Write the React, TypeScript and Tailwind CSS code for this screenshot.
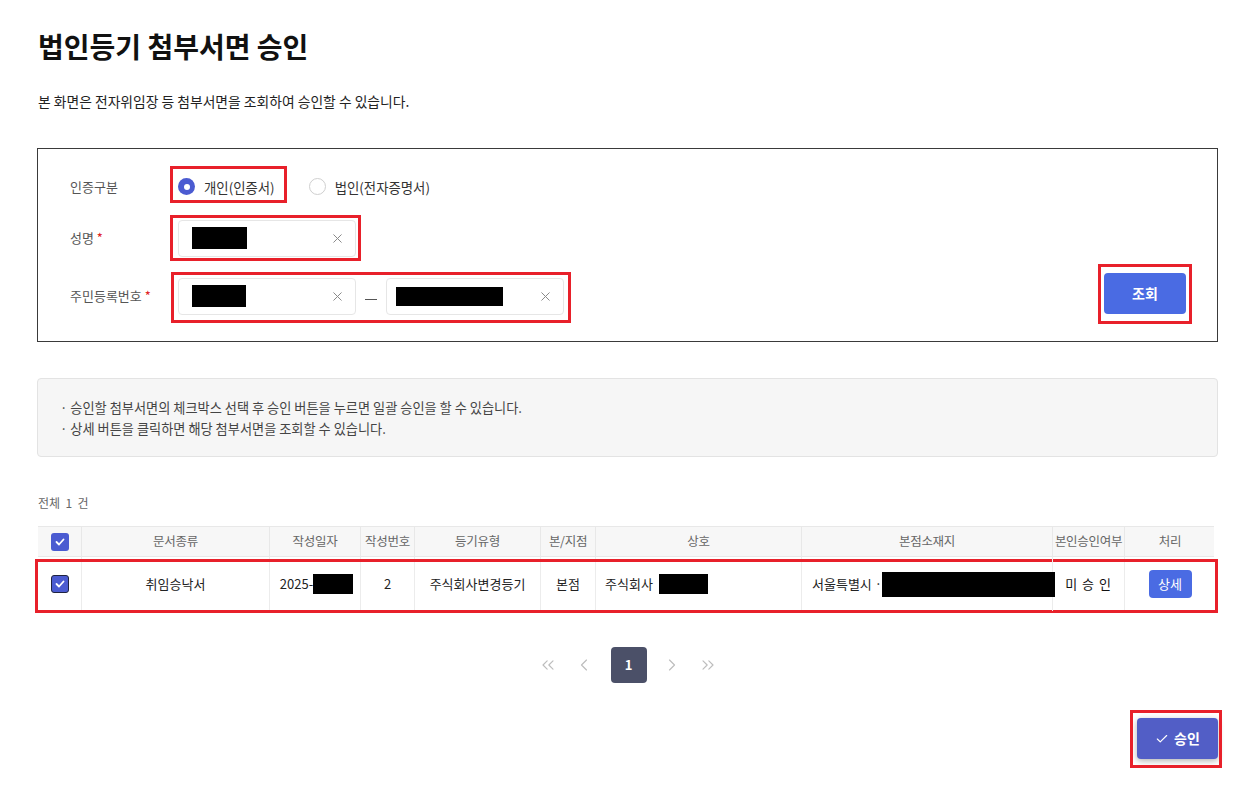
import React from "react";
import { ChevronLeft, ChevronRight, ChevronsLeft, ChevronsRight, Check, X } from "lucide-react";

function RedBox({ className }: { className: string }) {
  return <span className={"pointer-events-none absolute border-[3px] border-[#e8202a] " + className} />;
}

function CheckBox({ focused }: { focused?: boolean }) {
  return (
    <span
      className={
        "flex h-[18px] w-[18px] items-center justify-center rounded-[3px] bg-[#4b5bd1] " +
        (focused ? "border border-[#1f2340]" : "")
      }
    >
      <svg width="10" height="8" viewBox="0 0 10 8" fill="none">
        <path d="M1.5 4l2.5 2.5L8.5 1.5" stroke="white" strokeWidth="1.8" strokeLinecap="round" strokeLinejoin="round" />
      </svg>
    </span>
  );
}

function ClearInput({ blackW, blackH = 22, pl = 13 }: { blackW: number; blackH?: number; pl?: number }) {
  return (
    <div
      className="flex h-[37px] w-[178px] items-center justify-between rounded-[4px] border border-[#e6e6e6] bg-white pr-[10px]"
      style={{ paddingLeft: pl }}
    >
      <div className="bg-black" style={{ width: blackW, height: blackH }} />
      <X size={15} strokeWidth={1.6} className="text-[#8a8a8a]" />
    </div>
  );
}

const cols = "grid grid-cols-[44px_188px_91px_54px_126px_55px_206px_251px_72px_90px]";

export default function App() {
  return (
    <div className="min-h-[787px] bg-white font-['Noto_Sans_CJK_KR','Noto_Sans',sans-serif] text-[#222]">
      <div className="ml-[37px] w-[1181px] pt-[27px]">
        <h1 className="pl-[1px] text-[28px] font-bold leading-[38px] text-[#111]">법인등기 첨부서면 승인</h1>
        <p className="mt-[26px] pl-[1px] text-[13.8px] leading-[20px] text-[#222]">
          본 화면은 전자위임장 등 첨부서면을 조회하여 승인할 수 있습니다.
        </p>

        {/* search box */}
        <div className="mt-[37px] border border-[#3a3a3a] pb-[26px] pl-[32px] pr-[31px] pt-[21px]">
          <div className="flex h-[34px] items-center">
            <div className="w-[108px] text-[13px] text-[#555]">인증구분</div>
            <div className="relative flex items-center gap-[9px]">
              <RedBox className="-left-[8px] -right-[12px] -top-[11px] -bottom-[6px]" />
              <span className="flex h-[17px] w-[17px] items-center justify-center rounded-full bg-[#4b5bd1]">
                <span className="h-[6px] w-[6px] rounded-full bg-white" />
              </span>
              <span className="text-[13.4px] text-[#333]">개인(인증서)</span>
            </div>
            <div className="ml-[34px] flex items-center gap-[9px]">
              <span className="h-[17px] w-[17px] rounded-full border border-[#cfcfcf] bg-white" />
              <span className="text-[13.4px] text-[#333]">법인(전자증명서)</span>
            </div>
          </div>

          <div className="mt-[15px] flex h-[38px] items-center">
            <div className="w-[108px] text-[13px] text-[#555]">
              성명 <span className="text-[#e02424]">*</span>
            </div>
            <div className="relative">
              <RedBox className="-left-[8px] -right-[5px] -top-[5px] -bottom-[4px]" />
              <ClearInput blackW={55} />
            </div>
          </div>

          <div className="mt-[20px] flex items-center justify-between">
            <div className="flex h-[38px] items-center">
              <div className="w-[108px] text-[13px] text-[#555]">
                주민등록번호 <span className="text-[#e02424]">*</span>
              </div>
              <div className="relative flex items-center">
                <RedBox className="-left-[7px] -right-[7px] -top-[6px] -bottom-[8px]" />
                <ClearInput blackW={54} />
                <span className="mx-[9px] mt-[6px] h-[1px] w-[12px] bg-[#555]" />
                <ClearInput blackW={107} blackH={19} pl={9} />
              </div>
            </div>
            <div className="relative -mt-[5px]">
              <RedBox className="-left-[6px] -right-[6px] -top-[9px] -bottom-[10px]" />
              <button className="h-[41px] w-[82px] rounded-[4px] bg-[#4a6be3] text-[14px] font-semibold text-white">
                조회
              </button>
            </div>
          </div>
        </div>

        {/* info box */}
        <div className="mt-[36px] rounded-[4px] border border-[#e3e3e3] bg-[#f6f6f6] pb-[17px] pl-[22px] pt-[18px] text-[13.2px] leading-[21px] text-[#444]">
          <p>· 승인할 첨부서면의 체크박스 선택 후 승인 버튼을 누르면 일괄 승인을 할 수 있습니다.</p>
          <p>· 상세 버튼을 클릭하면 해당 첨부서면을 조회할 수 있습니다.</p>
        </div>

        <p className="mt-[37px] pl-[1px] text-[12px] leading-[18px] text-[#666]">전체&nbsp; 1&nbsp; 건</p>

        {/* table */}
        <div className="mt-[14px] w-[1177px] pl-[1px]">
          <div className={cols + " h-[31px] border-y border-[#e8e8e8] bg-[#f7f7f7] text-[12.5px] text-[#666]"}>
            <div className="flex items-center justify-center border-r border-[#e8e8e8]">
              <CheckBox />
            </div>
            {["문서종류", "작성일자", "작성번호", "등기유형", "본/지점", "상호", "본점소재지", "본인승인여부", "처리"].map((h, i) => (
              <div
                key={h}
                className={
                  "flex items-center justify-center whitespace-nowrap tracking-[-0.3px] " +
                  (i < 8 ? "border-r border-[#e8e8e8]" : "")
                }
              >
                {h}
              </div>
            ))}
          </div>
          <div className="relative">
            <RedBox className="-left-[3px] -right-[4px] top-[2px] -bottom-[1px]" />
            <div className={cols + " h-[55px] border-b border-[#e8e8e8] text-[13px] text-[#222]"}>
              <div className="flex items-center justify-center border-r border-[#ececec]">
                <CheckBox focused />
              </div>
              <div className="flex items-center justify-center border-r border-[#ececec]">취임승낙서</div>
              <div className="flex items-center justify-center border-r border-[#ececec] pl-[3px]">
                <span>2025-</span>
                <span className="h-[20px] w-[40px] bg-black" />
              </div>
              <div className="flex items-center justify-center border-r border-[#ececec]">2</div>
              <div className="flex items-center justify-center border-r border-[#ececec]">주식회사변경등기</div>
              <div className="flex items-center justify-center border-r border-[#ececec]">본점</div>
              <div className="flex items-center border-r border-[#ececec] pl-[9px]">
                <span>주식회사</span>
                <span className="ml-[6px] h-[20px] w-[49px] bg-black" />
              </div>
              <div className="relative flex items-center border-r border-[#ececec] pl-[10px]">
                <span>서울특별시 ·</span>
                <span className="absolute left-[80px] top-[15px] h-[25px] w-[173px] bg-black" />
              </div>
              <div className="flex items-center justify-center border-r border-[#ececec] tracking-[1px] text-[#111]">
                미 승 인
              </div>
              <div className="flex items-center justify-center">
                <button className="h-[28px] w-[43px] rounded-[4px] bg-[#4a6be3] text-[13px] text-white">상세</button>
              </div>
            </div>
          </div>
        </div>

        {/* pagination */}
        <div className="mt-[35px] flex items-center justify-center text-[#bdbdbd]">
          <span className="flex h-[36px] w-[36px] items-center justify-center">
            <ChevronsLeft size={20} strokeWidth={1.4} />
          </span>
          <span className="flex h-[36px] w-[36px] items-center justify-center">
            <ChevronLeft size={20} strokeWidth={1.4} />
          </span>
          <span className="ml-[9px] mr-[7px] flex h-[36px] w-[36px] items-center justify-center rounded-[4px] bg-[#4b5068] text-[13px] font-bold text-white">
            1
          </span>
          <span className="flex h-[36px] w-[36px] items-center justify-center">
            <ChevronRight size={20} strokeWidth={1.4} />
          </span>
          <span className="flex h-[36px] w-[36px] items-center justify-center">
            <ChevronsRight size={20} strokeWidth={1.4} />
          </span>
        </div>

        {/* approve */}
        <div className="mt-[35px] flex justify-end">
          <div className="relative">
            <RedBox className="-left-[7px] -right-[4px] -top-[8px] -bottom-[9px]" />
            <button className="flex h-[41px] w-[81px] items-center justify-center gap-[5px] rounded-[4px] bg-[#525ec6] text-[14px] font-semibold text-white shadow-[0_2px_6px_rgba(0,0,0,0.3)]">
              <Check size={14} strokeWidth={2} />
              승인
            </button>
          </div>
        </div>
      </div>
    </div>
  );
}
